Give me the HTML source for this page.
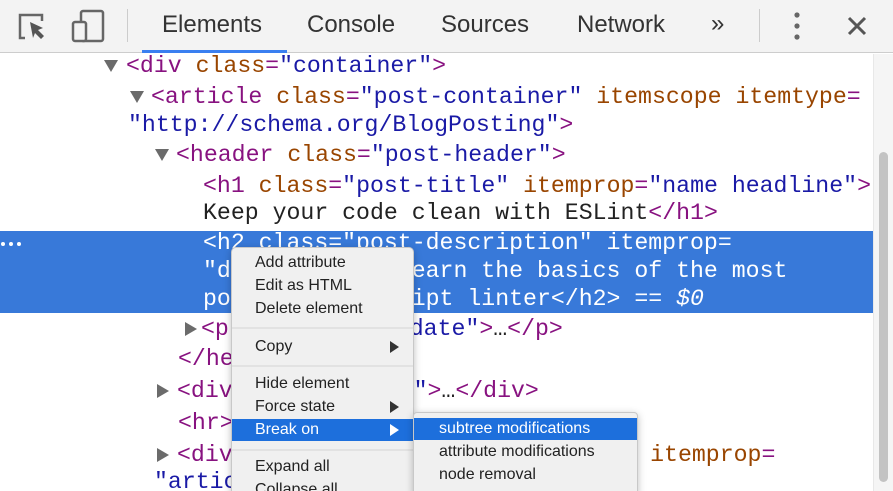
<!DOCTYPE html>
<html style="overflow:hidden;width:893px;height:491px"><head><meta charset="utf-8"><style>
*{margin:0;padding:0;box-sizing:border-box}
body{width:893px;height:491px;overflow:hidden;background:#fff;position:relative;font-family:"Liberation Sans",sans-serif}
.tb{position:absolute;left:0;top:0;width:893px;height:53px;background:#f3f3f3;border-bottom:1px solid #cdcdcd}
.tab{position:absolute;top:11px;font-size:24px;color:#333}
.ul{position:absolute;left:142px;top:50px;width:145px;height:3px;background:#3a7ff0}
.ln{position:absolute;font-family:"Liberation Mono",monospace;font-size:23.2px;line-height:28px;white-space:pre;color:#222}
.t{color:#881280}.a{color:#994500}.v{color:#1a1aa6}.g{color:#8b8b8b}
.sel{position:absolute;left:0;top:231px;width:873px;height:82px;background:#3879d9}
.sel .ln,.sel .ln span{color:#fff}
.tri{position:absolute;width:0;height:0}
.down{border-left:7px solid transparent;border-right:7px solid transparent;border-top:12px solid #6b6b6b}
.right{border-top:7px solid transparent;border-bottom:7px solid transparent;border-left:12px solid #6b6b6b}
.menu{position:absolute;background:#f0f0f0;border:1px solid #c8c8c8;border-radius:5px;box-shadow:0 2px 8px rgba(0,0,0,.25);font-size:16px;color:#222;overflow:hidden}
.mi{position:absolute;left:0;right:0;height:22px;line-height:22px;padding-left:23px}
.hl{background:#1d6fdc;color:#fff}
.sep{position:absolute;left:0;right:0;height:2px;background:#e2e2e2}
.arr{position:absolute;right:14px;top:5px;border-top:6px solid transparent;border-bottom:6px solid transparent;border-left:9px solid #333}
</style></head><body>
<div class="tb">
<svg style="position:absolute;left:17px;top:12px" width="32" height="30" viewBox="0 0 32 30"><path d="M8 26H3V3h22v6" fill="none" stroke="#666" stroke-width="2.5"/><path d="M13 10l13 6-5 2 6 6-3 3-6-6-2 5z" fill="#555"/></svg>
<svg style="position:absolute;left:70px;top:9px" width="36" height="34" viewBox="0 0 36 34"><rect x="11" y="2" width="22" height="30" rx="2" fill="none" stroke="#666" stroke-width="2.5"/><rect x="3" y="13" width="13" height="19" rx="2" fill="#f3f3f3" stroke="#666" stroke-width="2.5"/></svg>
<div style="position:absolute;left:127px;top:9px;width:1px;height:33px;background:#ccc"></div>
<div class="tab" style="left:162px">Elements</div>
<div class="tab" style="left:307px">Console</div>
<div class="tab" style="left:441px">Sources</div>
<div class="tab" style="left:577px">Network</div>
<div class="tab" style="left:711px;top:10px;font-size:24px">»</div>
<div style="position:absolute;left:759px;top:9px;width:1px;height:33px;background:#ccc"></div>
<svg style="position:absolute;left:791px;top:12px" width="12" height="30"><circle cx="6" cy="3" r="2.6" fill="#666"/><circle cx="6" cy="14" r="2.6" fill="#666"/><circle cx="6" cy="25" r="2.6" fill="#666"/></svg>
<svg style="position:absolute;left:846px;top:15px" width="22" height="22"><path d="M3 3l16 16M19 3L3 19" stroke="#555" stroke-width="3"/></svg>
<div class="ul"></div>
</div>
<div style="position:absolute;left:873px;top:54px;width:20px;height:437px;background:#f5f5f5;border-left:1px solid #e8e8e8"></div>
<div style="position:absolute;left:879px;top:152px;width:9px;height:330px;background:#c3c3c3;border-radius:5px"></div>

<div class="sel"></div>
<div class="tri down" style="left:104px;top:60px"></div>
<div class="ln" style="left:126px;top:52px"><span class="t">&lt;div </span><span class="a">class</span><span class="t">=</span><span class="v">"container"</span><span class="t">&gt;</span></div>
<div class="tri down" style="left:130px;top:91px"></div>
<div class="ln" style="left:151px;top:83px"><span class="t">&lt;article </span><span class="a">class</span><span class="t">=</span><span class="v">"post-container"</span> <span class="a">itemscope itemtype</span><span class="t">=</span></div>
<div class="ln" style="left:128px;top:111px"><span class="v">"http://schema.org/BlogPosting"</span><span class="t">&gt;</span></div>
<div class="tri down" style="left:155px;top:149px"></div>
<div class="ln" style="left:176px;top:141px"><span class="t">&lt;header </span><span class="a">class</span><span class="t">=</span><span class="v">"post-header"</span><span class="t">&gt;</span></div>
<div class="ln" style="left:203px;top:172px"><span class="t">&lt;h1 </span><span class="a">class</span><span class="t">=</span><span class="v">"post-title"</span> <span class="a">itemprop</span><span class="t">=</span><span class="v">"name headline"</span><span class="t">&gt;</span></div>
<div class="ln" style="left:203px;top:199px">Keep your code clean with ESLint<span class="t">&lt;/h1&gt;</span></div>
<div class="sel" style="background:transparent">
<svg style="position:absolute;left:0;top:10px" width="24" height="6"><circle cx="3" cy="3" r="2" fill="#fff"/><circle cx="11" cy="3" r="2" fill="#fff"/><circle cx="19" cy="3" r="2" fill="#fff"/></svg>
<div class="ln" style="left:203px;top:-2px">&lt;h2 class="post-description" itemprop=</div>
<div class="ln" style="left:203px;top:26px">"description"&gt;Learn the basics of the most</div>
<div class="ln" style="left:203px;top:54px">popular JavaScript linter&lt;/h2&gt; == <i>$0</i></div>
</div>
<div class="tri right" style="left:185px;top:322px"></div>
<div class="ln" style="left:201px;top:315px"><span class="t">&lt;p </span><span class="a">class</span><span class="t">=</span><span class="v">"post-date"</span><span class="t">&gt;</span>…<span class="t">&lt;/p&gt;</span></div>
<div class="ln" style="left:178px;top:345px"><span class="t">&lt;/header&gt;</span></div>
<div class="tri right" style="left:157px;top:384px"></div>
<div class="ln" style="left:177px;top:377px"><span class="t">&lt;div </span><span class="a">class</span><span class="t">=</span><span class="v">"cover"</span><span class="t">&gt;</span>…<span class="t">&lt;/div&gt;</span></div>
<div class="ln" style="left:178px;top:409px"><span class="t">&lt;hr&gt;</span></div>
<div class="tri right" style="left:157px;top:448px"></div>
<div class="ln" style="left:177px;top:441px"><span class="t">&lt;div </span><span class="a">class</span><span class="t">=</span><span class="v">"post-content-article"</span> <span class="a">itemprop</span><span class="t">=</span></div>
<div class="ln" style="left:154px;top:468px"><span class="v">"articleBody"</span></div>

<div class="menu" style="left:231px;top:247px;width:183px;height:250px">
<div class="mi" style="top:4px">Add attribute</div>
<div class="mi" style="top:27px">Edit as HTML</div>
<div class="mi" style="top:50px">Delete element</div>
<div class="sep" style="top:79px"></div>
<div class="mi" style="top:88px">Copy<div class="arr"></div></div>
<div class="sep" style="top:117px"></div>
<div class="mi" style="top:125px">Hide element</div>
<div class="mi" style="top:148px">Force state<div class="arr"></div></div>
<div class="mi hl" style="top:171px">Break on<div class="arr" style="border-left-color:#fff"></div></div>
<div class="sep" style="top:201px"></div>
<div class="mi" style="top:208px">Expand all</div>
<div class="mi" style="top:231px">Collapse all</div>
</div>
<div class="menu" style="left:413px;top:412px;width:225px;height:85px;border-radius:4px">
<div class="mi hl" style="top:5px;padding-left:25px">subtree modifications</div>
<div class="mi" style="top:28px;padding-left:25px">attribute modifications</div>
<div class="mi" style="top:51px;padding-left:25px">node removal</div>
</div>
</body></html>
